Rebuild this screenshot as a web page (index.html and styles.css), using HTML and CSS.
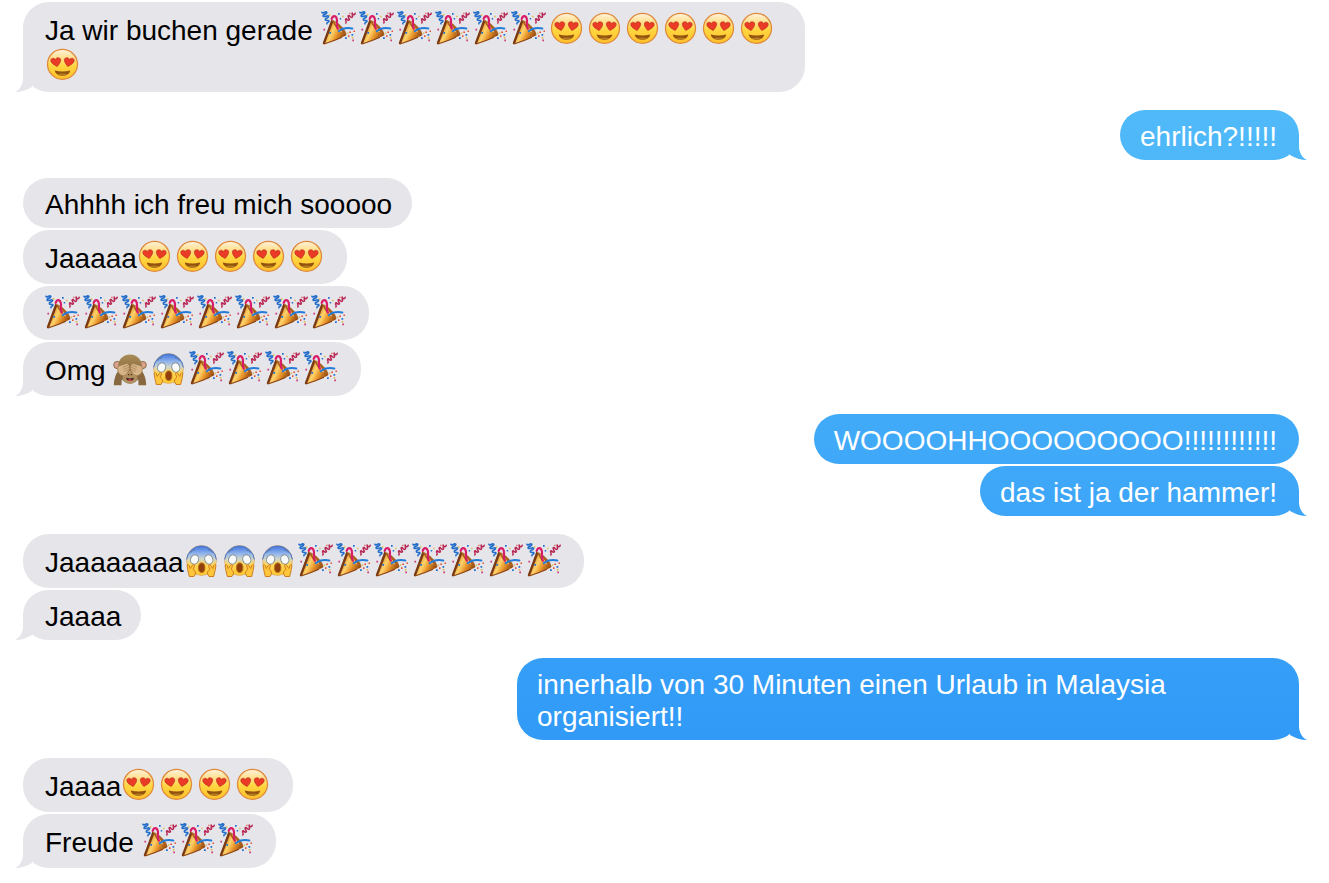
FILE: index.html
```html
<!DOCTYPE html>
<html lang="de">
<head>
<meta charset="UTF-8" />
<meta name="viewport" content="width=device-width, initial-scale=1.0"/>
<title>Nachrichten</title>
<link rel="stylesheet" href="styles.css">
</head>
<body>
<svg class="sprite" aria-hidden="true">
  <defs>
    <linearGradient id="skin" x1="0" y1="0" x2="0" y2="1">
      <stop offset="0" stop-color="#fff3df"/>
      <stop offset=".3" stop-color="#ffe08a"/>
      <stop offset=".55" stop-color="#ffd640"/>
      <stop offset="1" stop-color="#ffbf2b"/>
    </linearGradient>
    <linearGradient id="fear" x1="0" y1="0" x2="0" y2="1">
      <stop offset="0" stop-color="#3e70dc"/>
      <stop offset=".25" stop-color="#89b0ed"/>
      <stop offset=".45" stop-color="#cfd6cc"/>
      <stop offset=".62" stop-color="#ffd75c"/>
      <stop offset="1" stop-color="#ffc52d"/>
    </linearGradient>
    <linearGradient id="cone" x1="0" y1="0" x2="1" y2=".5">
      <stop offset="0" stop-color="#8a4315"/>
      <stop offset=".3" stop-color="#dc8a22"/>
      <stop offset=".52" stop-color="#ffd36b"/>
      <stop offset=".72" stop-color="#e8952a"/>
      <stop offset="1" stop-color="#96490f"/>
    </linearGradient>
    <linearGradient id="fur" x1="0" y1="0" x2="0" y2="1">
      <stop offset="0" stop-color="#a98c55"/>
      <stop offset="1" stop-color="#755634"/>
    </linearGradient>
  </defs>
  <symbol id="love" viewBox="0 2 38 30" overflow="visible">
    <circle cx="17.5" cy="16.300" r="15" fill="url(#skin)" stroke="#e08a3c" stroke-width="1.300"/>
    <g fill="#e93b25" stroke="#b92c1c" stroke-width=".6">
      <path d="M12.200 18.500C9 16.800 5.800 15 5.800 12.400c0-2.500 3.400-3 4.500-.7.7-2.700 5.400-2.600 5.400.3 0 2.300-1.800 4.500-3.500 6.500z"/>
      <path d="M22.800 18.500c3.200-1.700 6.400-3.500 6.400-6.100 0-2.500-3.400-3-4.500-.7-.7-2.700-5.400-2.600-5.400.3 0 2.300 1.800 4.500 3.500 6.500z"/>
    </g>
    <path d="M9.800 22.500q7.700 2.200 15.400 0c-.4 3.300-3.500 5.200-7.700 5.200s-7.300-1.900-7.700-5.200z" fill="#91530e"/>
    <path d="M12 26.200q5.500-1.300 11 0-2.200 1.500-5.500 1.500t-5.500-1.500z" fill="#b47a22"/>
  </symbol>
  <symbol id="party" viewBox="0 2 38 30" overflow="visible">
    <path d="M10.800 7.800 25.400 22.800Q24 25 2.600 32.300q-.8 0-.6-1.300z" fill="url(#cone)"/>
    <path d="M1.800 31 10.300 7.800l2 1.800L4 31.800l-1.400.5q-.8 0-.8-1.300z" fill="#793914"/>
    <path d="M10.800 7.800q5 1.200 10.400 7.200 4.200 4.600 4.200 7.800l-5.200-2q-5.800-3.700-9.400-13z" fill="#a9601f"/>
    <path d="m13.200 8.500 8.400 12-3.600-.7z" fill="#ecb964"/>
    <path d="M3 32q10-3.200 18-6.800" fill="none" stroke="#8a4315" stroke-width="1.200"/>
    <g fill="none" stroke-linecap="round" stroke-linejoin="round">
      <path d="M1 .2C1.600 2.400 4.200-1.200 5.700.2 6.800 1.900 1 2.500 2.200 4.300c1.200 1.300 4.700-1.800 5.400-.1.600 1.800-4.300 2-3.100 3.900 1.100 1.300 3.600-.6 3.400 1.200-.3 1.400-2.500.8-2 2.400" stroke="#236dca" stroke-width="1.600"/>
      <path d="M10.700 7c1.100-3.900 3.900-3.700 5-.5 1.200 3.500-1 7 1.200 10" stroke="#d91c66" stroke-width="2.200"/>
      <path d="M34.200 1.200c-.4 2.600-2.500 1.600-3-.3-.5 1.900 1.400 4.300-.6 4.600-1.500 0-2.500-3-3.400-1.800-.9 1.200 2.600 4.200.6 4.600-1.500.2-2.600-2.500-3.200-1.100-.5 1.200 1.500 2.300.2 3.700" stroke="#b92855" stroke-width="1.500"/>
      <path d="M17.700 19.300q5.400-4.500 13.700-2.800" stroke="#247bd8" stroke-width="1.900"/>
    </g>
    <g fill="#236fd2"><path d="M17 1h1.700v1.700H17zM18.700 6h1.500v1.500h-1.500zM8.300 20h1.800v1.800H8.300zM24 25.200h1.800V27H24zM30.500 22h1.700v1.700h-1.700z"/></g>
    <g fill="#e35238"><path d="M28.300 19.500H30v1.600h-1.700zM32.500 18.500H34V20h-1.500zM27 23.200h1.500v1.700H27zM28.300.7h1.200v1.200h-1.200z"/></g>
    <g fill="#cf3a77"><path d="M2.400 16.800h1.700v1.700H2.400zM31.300 27.500H33v1.700h-1.700z"/></g>
    <g fill="#dbb53a"><path d="M7.800 2.300h1.500v1.500H7.800zM21.200 3.800h1.300v1.500h-1.300zM30.800 25h1.500v1.500h-1.500zM26 20.500h1.300v1.300H26z"/></g>
  </symbol>
  <symbol id="scream" viewBox="0 2 38 30" overflow="visible">
    <circle cx="17.500" cy="16.500" r="15" fill="url(#fear)" stroke="#d5a05a" stroke-width=".6"/>
    <path d="M2.600 15.500a15 15 0 0 1 29.800 0" fill="none" stroke="#4c77cb" stroke-width="1"/>
    <path d="M6.500 8.800q2-2.800 4.800-3.200M28.500 8.800q-2-2.800-4.800-3.200" fill="none" stroke="#5575a5" stroke-width="1"/>
    <g fill="#f8f9f9" stroke="#84919a" stroke-width="1">
      <ellipse cx="10.600" cy="15.500" rx="4" ry="4.700" transform="rotate(20 10.600 15.500)"/>
      <ellipse cx="24.800" cy="15.500" rx="4" ry="4.700" transform="rotate(-20 24.800 15.500)"/>
    </g>
    <ellipse cx="17.700" cy="23.700" rx="3.200" ry="4.800" fill="#91400d" stroke="#b8700f" stroke-width="1"/>
    <g fill="#ffc63c" stroke="#c87418" stroke-width=".9" stroke-linejoin="round">
      <path d="M3 21.300q1.200-1.800 2.200.2l1 3 2.300-3.300q1.500-1.500 2 .3l-1.200 4 1.900 2q1.200 2.200-1.200 5H5.300Q3.800 27 3 21.300z"/>
      <path d="M32 21.300q-1.200-1.800-2.200.2l-1 3-2.300-3.300q-1.500-1.500-2 .3l1.200 4-1.900 2q-1.200 2.200 1.200 5h4.700q1.500-5.500 2.300-11.200z"/>
    </g>
  </symbol>
  <symbol id="monkey" viewBox="0 2 38 30" overflow="visible">
    <circle cx="4.300" cy="13" r="3.600" fill="#d9a28e" stroke="#8d6c43" stroke-width="1"/>
    <circle cx="29.700" cy="13" r="3.600" fill="#d9a28e" stroke="#8d6c43" stroke-width="1"/>
    <path d="M17 2.500c7.500 0 12 5.500 12 13 0 9-5.300 16-12 16S5 24.500 5 15.500c0-7.500 4.500-13 12-13z" fill="url(#fur)"/>
    <ellipse cx="17" cy="25" rx="7.800" ry="6.800" fill="#b08f60"/>
    <path d="M15 22.700h1.200M17.800 22.700H19" stroke="#4b3218" stroke-width="1.200"/>
    <path d="M13 25.800q4 1.400 8 0-.7 3.200-4 3.200t-4-3.200z" fill="#3d1d16"/>
    <path d="M14.500 27.700q2.500-1 5 0-1 1.300-2.500 1.300t-2.500-1.300z" fill="#d8405a"/>
    <path d="M.8 33.200q.2-9 4.200-14l5.700 3.200q-2.700 5-2.200 10.800zM33.200 33.200q-.2-9-4.200-14l-5.700 3.200q2.700 5 2.200 10.800z" fill="#87683f"/>
    <g fill="#d6b487" stroke="#987448" stroke-width=".6">
      <path d="M4.700 18.500q-1-3.400 1.700-4.800l7.500-2.300q1.900-.2 1.700 1.500 1.500.6.700 2 1.100 1.100-.2 2.400.4 1.700-1.200 2.200-.5 4-4.500 4.300Q6 23.500 4.700 18.500z"/>
      <path d="M29.300 18.500q1-3.400-1.700-4.800l-7.500-2.300q-1.900-.2-1.700 1.500-1.500.6-.7 2-1.100 1.100.2 2.400-.4 1.700 1.200 2.200.5 4 4.500 4.300 4.400-.3 5.700-5.300z"/>
      <path d="m10 15.300 5.600-2.200M10.500 17.500l5.600-2.300M11.200 19.500l4.700-2M24 15.300l-5.600-2.200M23.500 17.500l-5.600-2.300M22.800 19.500l-4.700-2"/>
    </g>
  </symbol>
</svg>

<main class="thread">
  <div class="group received">
    <p class="bubble has-emoji">Ja wir buchen gerade 🎉🎉🎉🎉🎉🎉😍😍😍😍😍😍😍</p>
  </div>
  <div class="group sent">
    <p class="bubble">ehrlich?!!!!!</p>
  </div>
  <div class="group received">
    <p class="bubble">Ahhhh ich freu mich sooooo</p>
    <p class="bubble has-emoji">Jaaaaa😍😍😍😍😍</p>
    <p class="bubble has-emoji">🎉🎉🎉🎉🎉🎉🎉🎉</p>
    <p class="bubble has-emoji">Omg 🙈😱🎉🎉🎉🎉</p>
  </div>
  <div class="group sent">
    <p class="bubble">WOOOOHHOOOOOOOOO!!!!!!!!!!!!</p>
    <p class="bubble">das ist ja der hammer!</p>
  </div>
  <div class="group received">
    <p class="bubble has-emoji">Jaaaaaaaa😱😱😱🎉🎉🎉🎉🎉🎉🎉</p>
    <p class="bubble">Jaaaa</p>
  </div>
  <div class="group sent">
    <p class="bubble">innerhalb von 30 Minuten einen Urlaub in Malaysia organisiert!!</p>
  </div>
  <div class="group received">
    <p class="bubble has-emoji">Jaaaa😍😍😍😍</p>
    <p class="bubble has-emoji">Freude 🎉🎉🎉</p>
  </div>
</main>
<script>
(function(){
  const icons={'🎉':'party','😍':'love','😱':'scream','🙈':'monkey'};

  // Swap emoji characters for the drawn ones
  document.querySelectorAll('.has-emoji').forEach(bubble=>{
    bubble.innerHTML=bubble.textContent.replace(/🎉|😍|😱|🙈/gu,ch=>
      '<svg class="emoji" role="img" aria-label="'+ch+'"><use href="#'+icons[ch]+'"/></svg>');
  });
})();
</script>
</body>
</html>
```
FILE: styles.css
```css
html,body {margin:0;padding:0;background:#fff;}
body {font-family:"Helvetica Neue","Liberation Sans",Arial,sans-serif;font-size:28px;line-height:32px;color:#000;}
.sprite {position:absolute;width:0;height:0;}

.thread {display:flex;flex-direction:column;gap:18px;padding:2px 30px 14px 23px;}
.group {display:flex;flex-direction:column;gap:2px;align-items:flex-start;}
.group.sent {align-items:flex-end;}

.bubble {
  position:relative;box-sizing:border-box;max-width:782px;margin:0;padding:11px 20px 7px 22px;
  border-radius:26px;background:#e5e5ea;overflow-wrap:anywhere;
}
.has-emoji {line-height:36px;}
.sent .bubble {
  padding:11px 22px 7px 20px;color:#fff;
  background:linear-gradient(#56bff9,#2a93f7) fixed;
}

/* tail on the last bubble of a group */
.bubble:last-child::after {
  content:"";position:absolute;bottom:0;left:-8px;width:18px;height:26px;background:inherit;
  clip-path:path("M8 0V12C8 18 5 24 0 26C6 26 12 24 17 21V0Z");
}
.sent .bubble:last-child::after {
  left:auto;right:-8px;
  clip-path:path("M10 0V12C10 18 13 24 18 26C12 26 6 24 1 21V0Z");
}

.emoji {width:38px;height:30px;vertical-align:-4px;overflow:visible;}
```
